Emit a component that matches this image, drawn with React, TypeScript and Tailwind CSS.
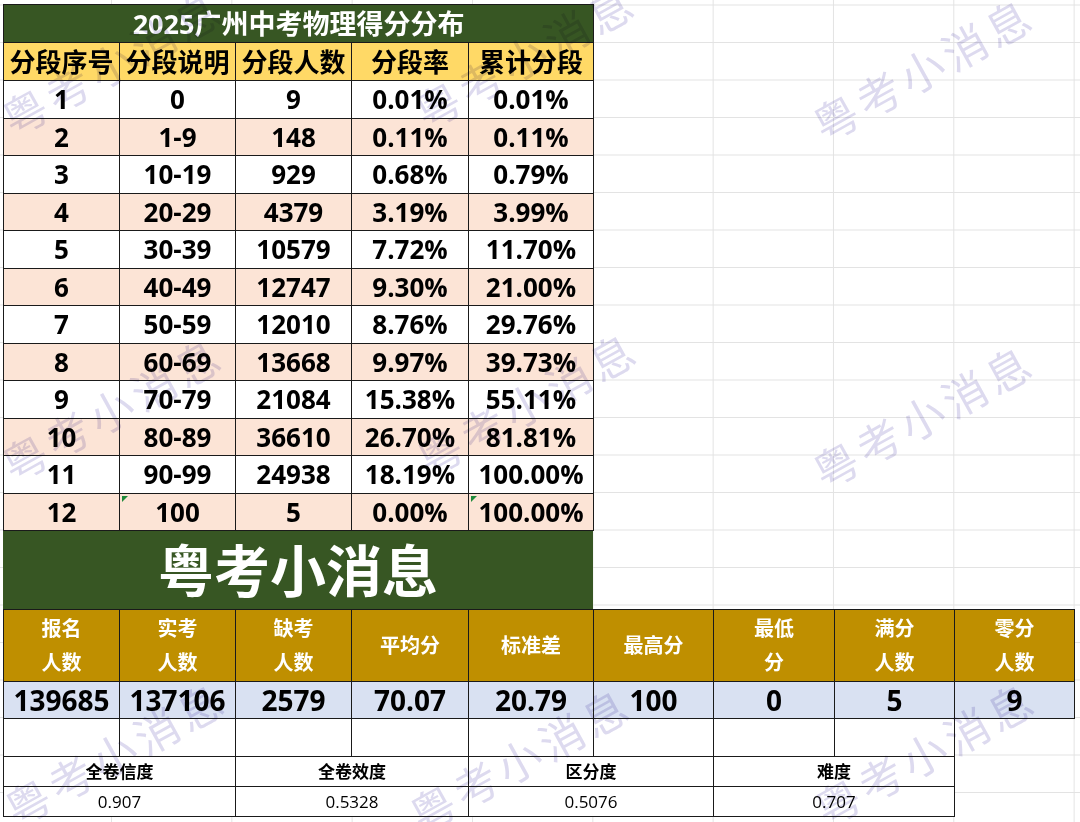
import React from "react";

const rows = [
  ["1", "0", "9", "0.01%", "0.01%"],
  ["2", "1-9", "148", "0.11%", "0.11%"],
  ["3", "10-19", "929", "0.68%", "0.79%"],
  ["4", "20-29", "4379", "3.19%", "3.99%"],
  ["5", "30-39", "10579", "7.72%", "11.70%"],
  ["6", "40-49", "12747", "9.30%", "21.00%"],
  ["7", "50-59", "12010", "8.76%", "29.76%"],
  ["8", "60-69", "13668", "9.97%", "39.73%"],
  ["9", "70-79", "21084", "15.38%", "55.11%"],
  ["10", "80-89", "36610", "26.70%", "81.81%"],
  ["11", "90-99", "24938", "18.19%", "100.00%"],
  ["12", "100", "5", "0.00%", "100.00%"],
];

const headers = ["分段序号", "分段说明", "分段人数", "分段率", "累计分段"];

const statHeads = [
  ["报名", "人数"],
  ["实考", "人数"],
  ["缺考", "人数"],
  ["平均分"],
  ["标准差"],
  ["最高分"],
  ["最低", "分"],
  ["满分", "人数"],
  ["零分", "人数"],
];

const statValues = ["139685", "137106", "2579", "70.07", "20.79", "100", "0", "5", "9"];

const quality = [
  ["全卷信度", "0.907"],
  ["全卷效度", "0.5328"],
  ["区分度", "0.5076"],
  ["难度", "0.707"],
];

// watermark spots, centre of each tilted label
const marks = [
  "left-[112px] top-[62px]",
  "left-[525px] top-[55px]",
  "left-[923px] top-[68px]",
  "left-[112px] top-[408px]",
  "left-[527px] top-[402px]",
  "left-[923px] top-[415px]",
  "left-[115px] top-[752px]",
  "left-[520px] top-[758px]",
  "left-[925px] top-[752px]",
];

const cell = "border border-[#1a1a1a] text-center align-middle p-0";

const Flag = () => (
  <span className="absolute left-[2px] top-[2px] h-0 w-0 border-t-[6px] border-r-[6px] border-t-[#1e8a3a] border-r-transparent" />
);

export default function App() {
  return (
    <div className="relative h-[822px] w-[1080px] overflow-hidden bg-white bg-[linear-gradient(to_right,#e3e3e3_1px,transparent_1px),linear-gradient(to_bottom,#e3e3e3_1px,transparent_1px)] bg-size-[120.33px_37.5px] bg-position-[111px_4.5px] pl-[3px] pt-[4px] font-['Open_Sans','Noto_Sans_CJK_SC',sans-serif] text-black">
      <table className="w-[590px] table-fixed border-collapse">
        <colgroup>
          <col className="w-[116px]" />
          <col className="w-[116px]" />
          <col className="w-[116px]" />
          <col className="w-[117px]" />
          <col className="w-[125px]" />
        </colgroup>
        <tbody>
          <tr className="h-[38px]">
            <td colSpan={5} className={`${cell} bg-[#375623] text-[27px] font-bold leading-none text-white`}>
              2025广州中考物理得分分布
            </td>
          </tr>
          <tr className="h-[38px] bg-[#ffd966]">
            {headers.map((h) => (
              <td key={h} className={`${cell} text-[26px] font-bold leading-none`}>
                {h}
              </td>
            ))}
          </tr>
          {rows.map((r, i) => (
            <tr key={r[0]} className={`h-[37.5px] ${i % 2 ? "bg-[#fce4d6]" : "bg-white"}`}>
              {r.map((v, j) => (
                <td key={j} className={`${cell} relative text-[26px] font-bold leading-none`}>
                  {i === 11 && (j === 1 || j === 4) && <Flag />}
                  {v}
                </td>
              ))}
            </tr>
          ))}
        </tbody>
      </table>

      <div className="flex h-[78px] w-[590px] items-center justify-center bg-[#375623] text-[56px] font-bold leading-none text-white">
        粤考小消息
      </div>

      <table className="w-[1071px] table-fixed border-collapse">
        <colgroup>
          <col className="w-[116px]" />
          <col className="w-[116px]" />
          <col className="w-[116px]" />
          <col className="w-[117px]" />
          <col className="w-[125px]" />
          <col className="w-[120px]" />
          <col className="w-[121px]" />
          <col className="w-[120px]" />
          <col className="w-[120px]" />
        </colgroup>
        <tbody>
          <tr className="h-[72px] bg-[#bf8f00]">
            {statHeads.map((h, i) => (
              <td key={i} className={`${cell} text-[20px] font-bold leading-[34px] text-white`}>
                {h.map((line) => (
                  <div key={line}>{line}</div>
                ))}
              </td>
            ))}
          </tr>
          <tr className="h-[37px] bg-[#d9e1f2]">
            {statValues.map((v, i) => (
              <td key={i} className={`${cell} text-[28px] font-bold leading-none`}>
                {v}
              </td>
            ))}
          </tr>
          <tr className="h-[38px]">
            {Array.from({ length: 8 }).map((_, i) => (
              <td key={i} className={`${cell} bg-white`} />
            ))}
            <td className="p-0" />
          </tr>
          <tr className="h-[30px]">
            {quality.map(([label]) => (
              <td key={label} colSpan={2} className={`${cell} bg-white text-[17px] font-bold leading-none`}>
                {label}
              </td>
            ))}
            <td className="p-0" />
          </tr>
          <tr className="h-[30px]">
            {quality.map(([label, v]) => (
              <td key={label} colSpan={2} className={`${cell} bg-white text-[17px] leading-none`}>
                {v}
              </td>
            ))}
            <td className="p-0" />
          </tr>
        </tbody>
      </table>

      <div className="pointer-events-none absolute inset-0">
        {marks.map((m) => (
          <span
            key={m}
            className={`absolute ${m} -translate-x-1/2 -translate-y-1/2 -rotate-[29deg] whitespace-nowrap font-['Noto_Sans_CJK_SC',sans-serif] text-[44px] leading-none tracking-[5px] text-[#cfcbe8] opacity-70 mix-blend-multiply`}
          >
            粤考小消息
          </span>
        ))}
      </div>
    </div>
  );
}
